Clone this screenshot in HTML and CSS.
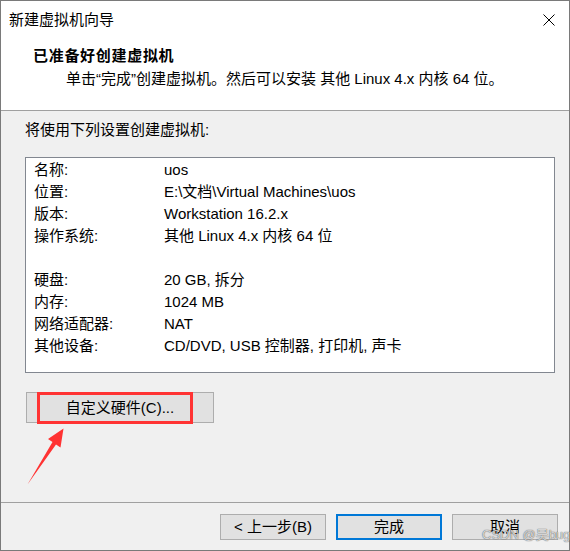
FILE: index.html
```html
<!DOCTYPE html>
<html lang="zh-CN">
<head>
<meta charset="utf-8">
<title>新建虚拟机向导</title>
<link rel="stylesheet" href="styles.css">
</head>
<body>
<div class="window">
  <div class="top">
    <div class="titlebar">
      <span class="title">新建虚拟机向导</span>
      <svg class="close" width="12" height="12" viewBox="0 0 12 12"><path d="M0.5 0.5L11.5 11.5M11.5 0.5L0.5 11.5" stroke="#000" stroke-width="1" fill="none"/></svg>
    </div>
    <div class="heading">已准备好创建虚拟机</div>
    <div class="subtitle">单击“完成”创建虚拟机。然后可以安装 其他 Linux 4.x 内核 64 位。</div>
  </div>
  <div class="body">
    <div class="intro">将使用下列设置创建虚拟机:</div>
    <div class="listbox">
      <div class="row"><span class="label">名称:</span><span class="value">uos</span></div>
      <div class="row"><span class="label">位置:</span><span class="value">E:\文档\Virtual Machines\uos</span></div>
      <div class="row"><span class="label">版本:</span><span class="value">Workstation 16.2.x</span></div>
      <div class="row"><span class="label">操作系统:</span><span class="value">其他 Linux 4.x 内核 64 位</span></div>
      <div class="row"></div>
      <div class="row"><span class="label">硬盘:</span><span class="value">20 GB, 拆分</span></div>
      <div class="row"><span class="label">内存:</span><span class="value">1024 MB</span></div>
      <div class="row"><span class="label">网络适配器:</span><span class="value">NAT</span></div>
      <div class="row"><span class="label">其他设备:</span><span class="value">CD/DVD, USB 控制器, 打印机, 声卡</span></div>
    </div>
    <div class="custom-wrap">
      <button class="btn custom">自定义硬件(C)...</button>
      <div class="highlight"></div>
      <svg class="arrow" width="50" height="100" viewBox="0 0 50 100"><polygon points="37.5,36.5 22,47 26.5,50 1.5,92.5 30,52.5 34.5,55.5" fill="#f33"/></svg>
    </div>
  </div>
  <div class="footer">
    <button class="btn">&lt; 上一步(B)</button>
    <button class="btn default">完成</button>
    <button class="btn">取消</button>
  </div>
  <div class="watermark">CSDN @吴bug</div>
</div>
</body>
</html>
```

FILE: styles.css
```css
* { box-sizing: border-box; }
html, body { margin: 0; padding: 0; }
body {
  font-family: "Liberation Sans", "Noto Sans CJK SC", sans-serif;
  font-size: 15px;
  color: #000;
  background: #fff;
}
.window {
  position: relative;
  width: 570px;
  height: 551px;
  border: 1px solid #7a7a7a;
  background: #f0f0f0;
  display: flex;
  flex-direction: column;
}
.top {
  flex: none;
  height: 110px;
  background: #fff;
  border-bottom: 1px solid #a0a0a0;
}
.titlebar {
  height: 37px;
  display: flex;
  align-items: center;
  justify-content: space-between;
  padding: 0 14px 0 8px;
  line-height: 20px;
}
.close { display: block; }
.heading {
  margin-top: 8px;
  padding-left: 32px;
  line-height: 20px;
  font-weight: bold;
  letter-spacing: 0.7px;
}
.subtitle {
  margin-top: 3px;
  padding-left: 65px;
  line-height: 20px;
}
.body {
  flex: 1;
  padding: 9px 14px 0 24px;
}
.intro { line-height: 20px; }
.listbox {
  margin-top: 17px;
  height: 216px;
  background: #fff;
  border: 1px solid #828790;
  padding: 1px 0 0 8px;
}
.row {
  display: flex;
  height: 22px;
  line-height: 22px;
  white-space: nowrap;
}
.label { width: 130px; flex: none; }
.btn {
  font: inherit;
  color: #000;
  background: #e1e1e1;
  border: 1px solid #adadad;
  padding: 0;
  line-height: 20px;
}
.custom-wrap {
  position: relative;
  margin-top: 19px;
  margin-left: 1px;
  width: 188px;
  height: 31px;
}
.custom {
  width: 188px;
  height: 31px;
}
.highlight {
  position: absolute;
  left: 11px;
  top: 0;
  width: 156px;
  height: 32px;
  border: 3px solid #f33;
}
.arrow {
  position: absolute;
  left: 0;
  top: 0;
  overflow: visible;
}
.footer {
  flex: none;
  height: 48px;
  border-top: 1px solid #a0a0a0;
  display: flex;
  justify-content: flex-end;
  align-items: flex-start;
  gap: 10px;
  padding: 11px 11px 0 0;
}
.footer .btn {
  width: 106px;
  height: 26px;
}
.footer .default {
  border: 2px solid #0078d7;
}
.watermark {
  position: absolute;
  left: 481px;
  top: 527px;
  font-size: 13px;
  line-height: 14px;
  color: rgba(255, 255, 255, 0.75);
  text-shadow: 0 0 1px rgba(0, 0, 0, 0.6), 0 0 1px rgba(0, 0, 0, 0.35);
  white-space: nowrap;
}
```
